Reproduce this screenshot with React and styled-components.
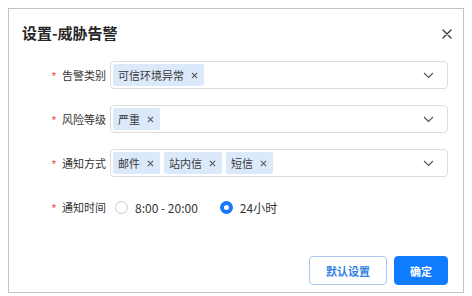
import styled, { createGlobalStyle } from 'styled-components';

const Global = createGlobalStyle`
    body {
        margin: 0;
        background: #ffffff;
        font-family: 'Noto Sans CJK SC', 'Noto Sans', sans-serif;
        color: #333333;
    }
`;

const fields = [
    { label: '告警类别', tags: ['可信环境异常'] },
    { label: '风险等级', tags: ['严重'] },
    { label: '通知方式', tags: ['邮件', '站内信', '短信'] },
];

const times = [
    { text: '8:00 - 20:00', checked: false },
    { text: '24小时', checked: true },
];

export default function App() {
    return (
        <>
            <Global />
            <Dialog>
                <Header>
                    <Title>设置-威胁告警</Title>
                    <Close>
                        <svg width="10" height="10" viewBox="0 0 10 10">
                            <path d="M1 1 L9 9 M9 1 L1 9" stroke="#333" strokeWidth="1.3" strokeLinecap="round" />
                        </svg>
                    </Close>
                </Header>
                <Form>
                    {fields.map(f => (
                        <Row key={f.label}>
                            <Label>{f.label}</Label>
                            <Select>
                                <Tags>
                                    {f.tags.map(t => (
                                        <Tag key={t}>
                                            {t}
                                            <svg width="7" height="7" viewBox="0 0 8 8">
                                                <path d="M1 1 L7 7 M7 1 L1 7" stroke="#555" strokeWidth="1.2" />
                                            </svg>
                                        </Tag>
                                    ))}
                                </Tags>
                                <svg width="11" height="7" viewBox="0 0 11 7">
                                    <path d="M1 1 L5.5 5.5 L10 1" fill="none" stroke="#555" strokeWidth="1.2" />
                                </svg>
                            </Select>
                        </Row>
                    ))}
                    <Row>
                        <Label>通知时间</Label>
                        <Radios>
                            {times.map(r => (
                                <Radio key={r.text}>
                                    <Dot checked={r.checked} />
                                    {r.text}
                                </Radio>
                            ))}
                        </Radios>
                    </Row>
                </Form>
                <Footer>
                    <Button>默认设置</Button>
                    <Button primary>确定</Button>
                </Footer>
            </Dialog>
        </>
    );
}

const Dialog = styled.div`
    margin: 8px;
    width: 456px;
    height: 285px;
    box-sizing: border-box;
    border: 1px solid #c4c4c4;
    display: flex;
    flex-direction: column;
`;

const Header = styled.div`
    display: flex;
    align-items: center;
    justify-content: space-between;
    padding: 15px 11px 0 13px;
    height: 18px;
`;

const Title = styled.div`
    font-size: 15px;
    font-weight: 700;
    line-height: 18px;
    color: #262626;
`;

const Close = styled.div`
    display: flex;
    padding-top: 1px;
`;

const Form = styled.div`
    display: flex;
    flex-direction: column;
    gap: 16px;
    margin-top: 19px;
    padding-right: 15px;
`;

const Row = styled.div`
    display: flex;
    align-items: center;
    height: 28px;
`;

const Label = styled.div`
    width: 101px;
    flex-shrink: 0;
    box-sizing: border-box;
    padding-right: 4px;
    text-align: right;
    font-size: 11px;
    color: #333;
    &::before {
        content: '*';
        color: #e0443a;
        margin-right: 6px;
        font-family: 'Liberation Sans', sans-serif;
        font-size: 11px;
    }
`;

const Select = styled.div`
    flex: 1;
    height: 28px;
    box-sizing: border-box;
    border: 1px solid #dcdcdc;
    border-radius: 4px;
    display: flex;
    align-items: center;
    justify-content: space-between;
    padding: 0 13px 0 2px;
`;

const Tags = styled.div`
    display: flex;
    gap: 4px;
`;

const Tag = styled.div`
    height: 22px;
    display: flex;
    align-items: center;
    gap: 7px;
    padding: 0 6px 0 5px;
    background: #dce9fb;
    border-radius: 2px;
    font-size: 11px;
    color: #3a3a3a;
`;

const Radios = styled.div`
    display: flex;
    gap: 22px;
    padding-left: 5px;
`;

const Radio = styled.div`
    display: flex;
    align-items: center;
    gap: 7px;
    font-size: 12px;
    color: #333;
`;

const Dot = styled.span`
    width: 13px;
    height: 13px;
    box-sizing: border-box;
    border-radius: 50%;
    background: #fff;
    border: ${p => (p.checked ? '4.5px solid #1677ff' : '1px solid #cccccc')};
`;

const Footer = styled.div`
    margin-top: auto;
    display: flex;
    justify-content: flex-end;
    gap: 7px;
    padding: 0 15px 7px 0;
`;

const Button = styled.button`
    height: 29px;
    padding: 0 ${p => (p.primary ? '15px' : '16px')};
    border-radius: 4px;
    font-family: 'Noto Sans CJK SC', sans-serif;
    font-size: 11px;
    font-weight: 700;
    border: 1px solid ${p => (p.primary ? '#0f7bff' : '#aac9f3')};
    background: ${p => (p.primary ? '#0f7bff' : '#ffffff')};
    color: ${p => (p.primary ? '#ffffff' : '#2f7fe6')};
`;
